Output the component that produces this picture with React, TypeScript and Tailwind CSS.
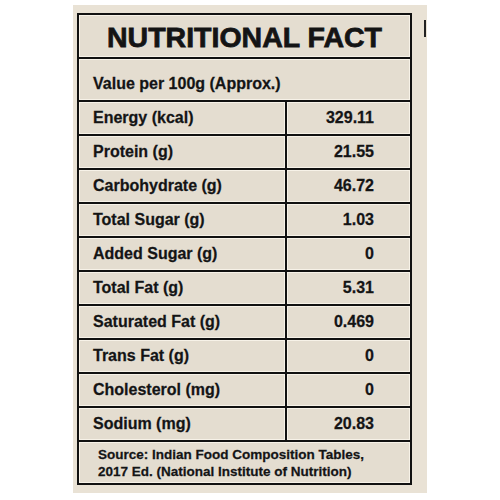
const rows = [
  { label: "Energy (kcal)", value: "329.11" },
  { label: "Protein (g)", value: "21.55" },
  { label: "Carbohydrate (g)", value: "46.72" },
  { label: "Total Sugar (g)", value: "1.03" },
  { label: "Added Sugar (g)", value: "0" },
  { label: "Total Fat (g)", value: "5.31" },
  { label: "Saturated Fat (g)", value: "0.469" },
  { label: "Trans Fat (g)", value: "0" },
  { label: "Cholesterol (mg)", value: "0" },
  { label: "Sodium (mg)", value: "20.83" },
];

const cell = "shadow-[inset_0_0_0_1px_#f7f2e8] bg-[#e4ddd0]";

const App = () => {
  return (
    <div className="w-[500px] h-[500px] bg-white flex justify-center pt-[5px] font-['Liberation_Sans',Arial,sans-serif] text-[#141414] [text-shadow:0_0_1px_#fbf8f1] [-webkit-text-stroke:0.3px_#141414]">
      <div className="relative w-[354px] h-[488px] bg-[#e9e2d5] pt-[8px] pl-[4px]">
        <span className="absolute right-[1px] top-[15px] w-[2px] h-[17px] bg-[#222]" />
        <div className="w-[335px] border-2 border-[#111] flex flex-col">
          <div className={`${cell} h-[44px] flex items-center justify-center pt-[2px] border-b-2 border-[#111]`}>
            <h1 className="text-[28.5px] font-bold leading-none [-webkit-text-stroke:0.8px_#141414]">NUTRITIONAL FACT</h1>
          </div>
          <div className={`${cell} h-[43px] flex items-center pl-[14px] pt-[9px] border-b-2 border-[#111] text-[16px] font-bold`}>
            Value per 100g (Approx.)
          </div>
          {rows.map((r) => (
            <div key={r.label} className="grid grid-cols-[206px_2px_123px] h-[34px] border-b-2 border-[#111] text-[16px] font-bold">
              <div className={`${cell} flex items-center pl-[14px]`}>{r.label}</div>
              <div className="bg-[#111]" />
              <div className={`${cell} flex items-center justify-end pr-[36px]`}>{r.value}</div>
            </div>
          ))}
          <div className={`${cell} h-[41px] flex flex-col justify-center pl-[19px] text-[13.5px] font-bold leading-[17px]`}>
            <span>Source: Indian Food Composition Tables,</span>
            <span>2017 Ed. (National Institute of Nutrition)</span>
          </div>
        </div>
      </div>
    </div>
  );
};

export default App;
